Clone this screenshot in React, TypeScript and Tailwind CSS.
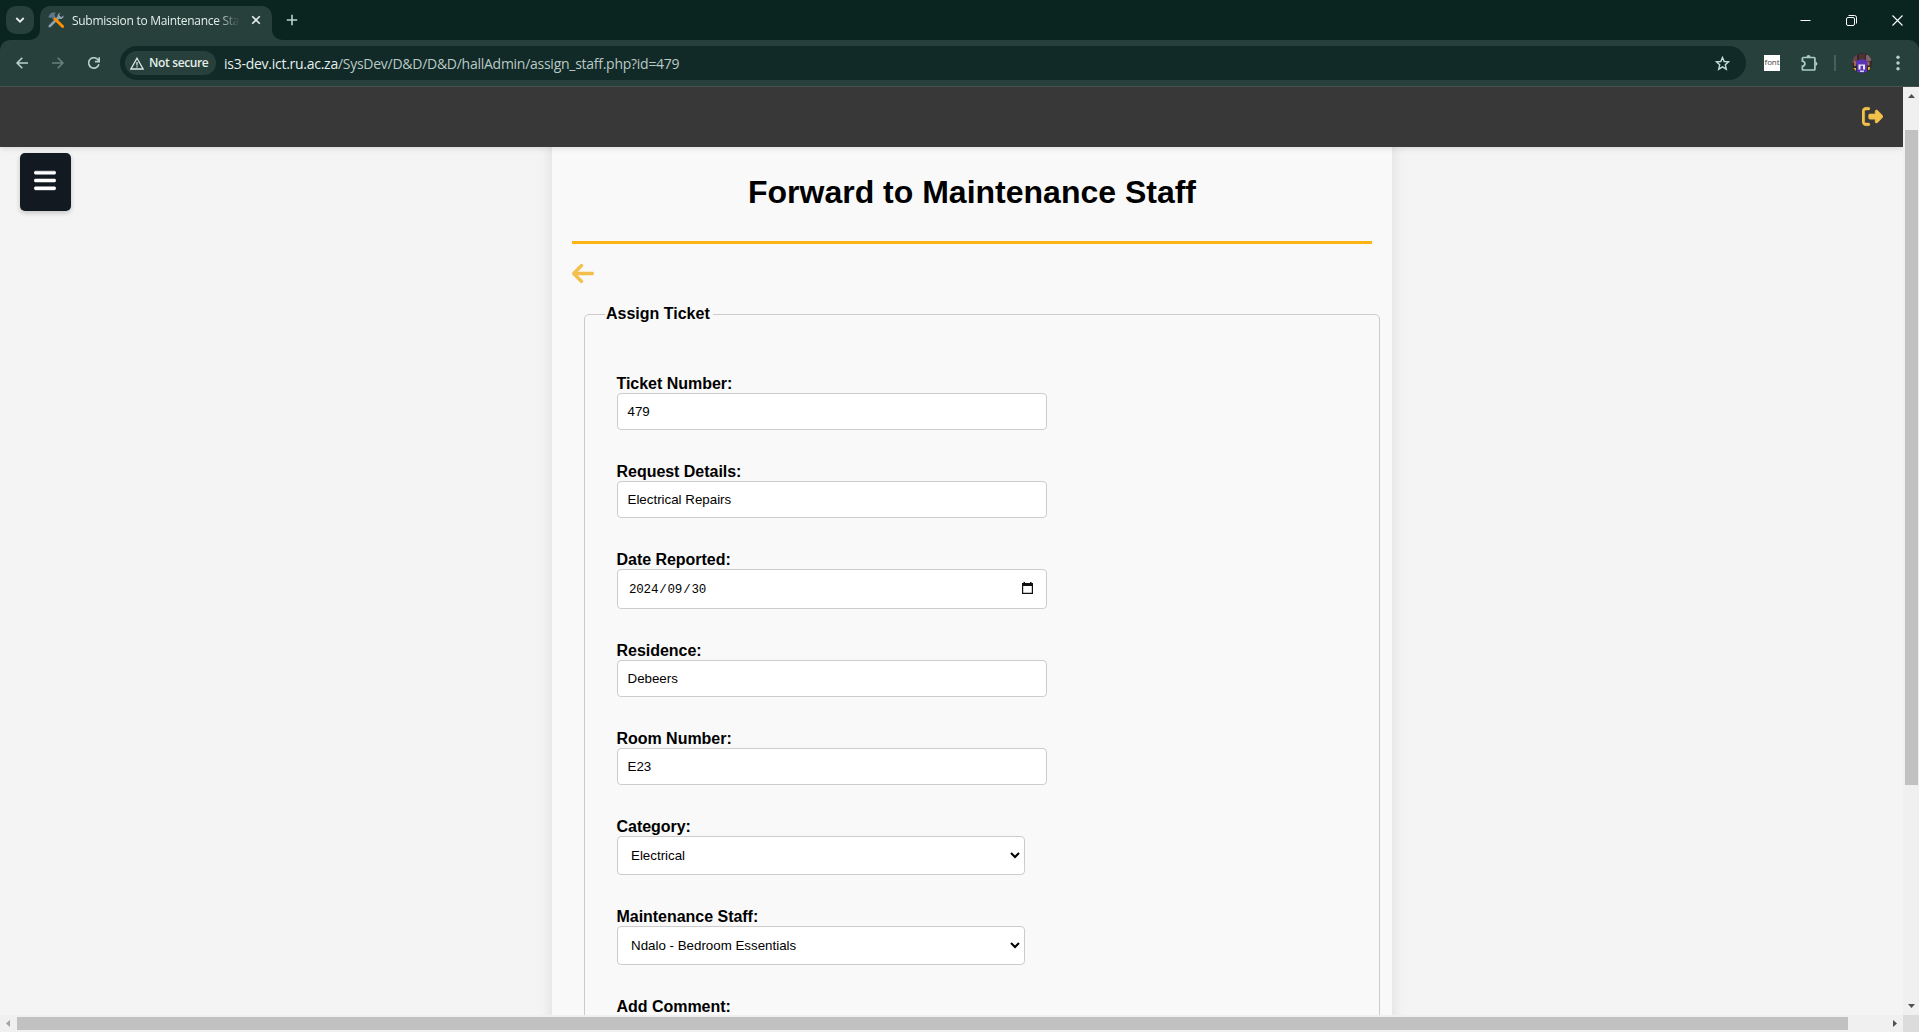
import React from "react";
import { FaArrowLeft, FaBars, FaRightFromBracket } from "react-icons/fa6";

const UI_FONT = "font-['Open_Sans','Noto_Sans',sans-serif]";
const PAGE_FONT = "font-['Liberation_Sans',Arial,sans-serif]";

function ToolsFavicon() {
  return (
    <svg className="h-4 w-4 shrink-0" viewBox="0 0 16 16" fill="none">
      <path d="M1.8 14.2 11 5" stroke="#8fa3b0" strokeWidth="2.6" strokeLinecap="round" />
      <path d="M12.6.8a3.4 3.4 0 0 0-3 4.4c.5 1.500 2.200 2 3.800 1.700 1.500-.4 2.300-1.600 2.200-3.300L13.500 5.100 11.400 4.300l-.2-1.700z" fill="#8fa3b0" />
      <path d="M6.200 6.200 14.600 14.500" stroke="#ff9100" strokeWidth="2.900" strokeLinecap="round" />
      <path d="M.4 4.500 2.200 2.100C3.600.6 5.600.3 8 .9 6.700 1.400 6.300 2 6.600 2.900L7.500 5.100 5.200 7.200 3.700 5.200 1.900 6.200z" fill="#61788a" />
    </svg>
  );
}

function TabStrip() {
  return (
    <div className={`flex h-10 items-start bg-[#0a2420] ${UI_FONT}`}>
      <button className="mt-1.5 ml-1.5 flex h-7 w-7 shrink-0 items-center justify-center rounded-[10px] bg-[#28403b]">
        <svg className="h-2.5 w-2.5" viewBox="0 0 10 10" fill="none" stroke="#e3eeea" strokeWidth="1.8">
          <path d="M1.300 3 5 6.700 8.700 3" />
        </svg>
      </button>
      <div className="mt-1.5 ml-[-4px] flex h-[34px] items-end">
        <svg className="h-2.5 w-2.5" viewBox="0 0 10 10">
          <path d="M10 0V10H0A10 10 0 0 0 10 0" fill="#28403b" />
        </svg>
        <div className="flex h-full w-[232px] items-start rounded-t-[10px] bg-[#28403b] pt-1.5 pl-2">
          <ToolsFavicon />
          <div className="ml-2 w-[168px] overflow-hidden text-[12px] leading-[17px] tracking-[-0.29px] whitespace-nowrap text-[#e3eeea] [mask-image:linear-gradient(to_right,black_86%,transparent_100%)]">
            Submission to Maintenance Staff
          </div>
          <svg className="mt-[3px] ml-[11px] h-2.5 w-2.5" viewBox="0 0 10 10" stroke="#e3eeea" strokeWidth="1.600">
            <path d="M1.200 1.200 8.800 8.800M8.800 1.200 1.200 8.800" />
          </svg>
        </div>
        <svg className="h-2.5 w-2.5" viewBox="0 0 10 10">
          <path d="M0 0V10H10A10 10 0 0 1 0 0" fill="#28403b" />
        </svg>
      </div>
      <svg className="mt-3.5 ml-1 h-3 w-3" viewBox="0 0 12 12" stroke="#b9d3cc" strokeWidth="1.600">
        <path d="M6 .8V11.200M.8 6H11.200" />
      </svg>
      <div className="mt-[15px] mr-4 ml-auto flex items-center gap-[35px]">
        <svg className="h-[11px] w-[11px]" viewBox="0 0 11 11" stroke="#fff" strokeWidth="1">
          <path d="M.5 5.500H10.500" />
        </svg>
        <svg className="h-[11px] w-[11px]" viewBox="0 0 11 11" stroke="#fff" fill="none" strokeWidth="1">
          <rect x=".5" y="2.500" width="8" height="8" rx="1.500" />
          <path d="M2.500.5H8.500A2 2 0 0 1 10.500 2.500V8.500" />
        </svg>
        <svg className="h-[11px] w-[11px]" viewBox="0 0 11 11" stroke="#fff" strokeWidth="1.100">
          <path d="M.5.5 10.500 10.500M10.500.5.5 10.500" />
        </svg>
      </div>
    </div>
  );
}

function Avatar() {
  return (
    <svg className="h-5 w-5" viewBox="0 0 20 20">
      <defs>
        <clipPath id="avatar-clip">
          <circle cx="10" cy="10" r="10" />
        </clipPath>
      </defs>
      <g clipPath="url(#avatar-clip)">
        <rect width="20" height="20" fill="#34272c" />
        <path d="M0 2h5v8H0z" fill="#67454f" />
        <path d="M14 2h5v6h-5z" fill="#82636a" />
        <path d="M7 1h6v6H7z" fill="#4a3431" />
        <path d="M4.500 8 8 6.500h4L15.500 8l1 3-1.500 1v8H5v-8l-1.500-1z" fill="#5a35b5" />
        <path d="M2 8h2v5H2zM15.500 8.500h2v4h-2z" fill="#9c6a52" />
        <path d="M6.500 11.500h2v5h-2zM11 11.500h2v5h-2zM8.500 11.500H11v1.200H8.500z" fill="#eee8f7" />
        <path d="M1 15h3v3H1zM16 14h2v3h-2z" fill="#e5b22c" />
        <path d="M8 17.500h4V19H8z" fill="#d8c9f5" />
      </g>
    </svg>
  );
}

function Toolbar() {
  return (
    <div className="bg-[#0a2420]">
      <div className={`flex h-[47px] items-center rounded-t-[10px] border-b border-[#47534f] bg-[#28403b] ${UI_FONT}`}>
        <div className="ml-4 flex items-center gap-6">
          <svg className="h-3 w-3" viewBox="0 0 12 12" fill="none" stroke="#b5d2ca" strokeWidth="1.600">
            <path d="M12 6H1.200M6.300.8 1.100 6l5.200 5.200" />
          </svg>
          <svg className="h-3 w-3" viewBox="0 0 12 12" fill="none" stroke="#68807a" strokeWidth="1.600">
            <path d="M0 6h10.800M5.700.8 10.900 6l-5.200 5.200" />
          </svg>
          <svg className="h-3 w-3" viewBox="0 0 12 12" fill="none" stroke="#b5d2ca" strokeWidth="1.600">
            <path d="M10.900 7.200A5.200 5.200 0 1 1 10.300 3.200L11 4.400M11.200.2V4.600H6.900" />
          </svg>
        </div>
        <div className="ml-5 flex h-[34px] w-[1626px] items-center rounded-full bg-[#112a27] pr-4 pl-[5px]">
          <div className="flex h-6 w-[91px] items-center rounded-full bg-[#28403b] pl-[5px]">
            <svg className="h-[13px] w-[14px]" viewBox="0 0 14 13" fill="none" stroke="#dbe8e4" strokeWidth="1.300">
              <path d="M7 1.200 13.100 12H.9zM7 5v3.600M7 9.300v1.300" />
            </svg>
            <span className="ml-[5px] text-[12px] font-semibold tracking-[-0.36px] whitespace-nowrap text-[#e3eeea]">Not secure</span>
          </div>
          <div className="ml-2 text-[14px] tracking-[-0.265px] whitespace-nowrap text-[#b9c9c5]">
            <span className="text-[#e6f0ed]">is3-dev.ict.ru.ac.za</span>/SysDev/D&amp;D/D&amp;D/hallAdmin/assign_staff.php?id=479
          </div>
          <svg className="ml-auto h-[15px] w-[15px]" viewBox="0 0 15 15" fill="none" stroke="#c3dcd5" strokeWidth="1.400">
            <path d="M7.500 1.500 9.200 5.500 13.600 5.900 10.300 8.800 11.300 13.200 7.500 10.900 3.700 13.200 4.700 8.800 1.400 5.900 5.800 5.500z" />
          </svg>
        </div>
        <div className="ml-[18px] flex h-4 w-4 items-center justify-center bg-white pb-0.5 text-[8px] leading-none tracking-[-0.1px] text-[#444]">font</div>
        <svg className="ml-[21px] h-[17px] w-[17px]" viewBox="0 0 17 17" fill="none">
          <path d="M2.200 2.500H13.100Q13.900 2.500 13.900 3.300V14.200Q13.900 15 13.100 15H2.200Q1.400 15 1.400 14.200V11.300Q3.900 10.800 3.900 8.800 3.900 6.700 1.400 6.200V3.300Q1.400 2.500 2.200 2.500Z" stroke="#a9cdc2" strokeWidth="1.700" />
          <path d="M5.500 2a2 1.900 0 0 1 4 0zM14.500 6.700a1.900 2 0 0 1 0 4z" fill="#a9cdc2" />
        </svg>
        <div className="ml-4 h-4 w-0.5 bg-[#446059]" />
        <div className="ml-4">
          <Avatar />
        </div>
        <svg className="ml-[24px] h-4 w-1" viewBox="0 0 4 16" fill="#b5d2ca">
          <circle cx="2" cy="2.300" r="1.700" />
          <circle cx="2" cy="8" r="1.700" />
          <circle cx="2" cy="13.700" r="1.700" />
        </svg>
      </div>
    </div>
  );
}

function Field({ label, children }: { label: string; children?: React.ReactNode }) {
  return (
    <div className="flex flex-col">
      <label className="ml-[-0.5px] h-[18px] text-[16px] leading-[18px] font-bold tracking-[-0.03px]">{label}</label>
      {children}
    </div>
  );
}

function TextBox({ value }: { value: string }) {
  return (
    <div className="flex h-[37px] w-[430px] items-center rounded-[4px] border border-[#ccc] bg-white px-[9.5px] pb-px text-[13.333px] leading-[15px]">
      {value}
    </div>
  );
}

function DateBox() {
  return (
    <div className="flex h-10 w-[430px] items-center justify-between rounded-[4px] border border-[#ccc] bg-white pr-[13px] pl-[11px]">
      <div className="flex gap-px pt-[3px] font-['Liberation_Mono',monospace] text-[12.500px] tracking-[-0.2px]">
        <span>2024</span>
        <span>/</span>
        <span>09</span>
        <span>/</span>
        <span>30</span>
      </div>
      <svg className="mb-0.5 h-3 w-[11px]" viewBox="0 0 11 12">
        <path d="M0 1H1.500V0H3V1H8V0H9.500V1H11V12H0ZM1.200 4V10.800H9.800V4Z" fill="#111" fillRule="evenodd" />
      </svg>
    </div>
  );
}

function SelectBox({ value }: { value: string }) {
  return (
    <div className="flex h-[39px] w-[408px] items-center justify-between rounded-[4px] border border-[#ccc] bg-white pr-1 pb-px pl-[13px] text-[13.333px] leading-[15px]">
      <span>{value}</span>
      <svg className="h-2 w-2.5" viewBox="0 0 10 8" fill="none" stroke="#000" strokeWidth="2">
        <path d="M1 2 5 6 9 2" />
      </svg>
    </div>
  );
}

function Page() {
  return (
    <div className={`flex min-w-0 flex-1 flex-col overflow-hidden bg-[#f4f4f4] text-black ${PAGE_FONT}`}>
      <header className="relative z-10 flex h-[60px] shrink-0 items-center justify-end bg-[#383838] pr-5 shadow-[0_2px_5px_rgba(0,0,0,0.1)]">
        <FaRightFromBracket className="mt-[-2px] h-[21px] w-[21px] stroke-[#f2c04b] stroke-[12] text-[#f2c04b]" />
      </header>
      <div className="flex min-h-0 flex-1">
        <aside className="w-[552px] shrink-0 pt-1.5 pl-5">
          <button className="flex h-[58px] w-[51px] items-center justify-center rounded-[5px] bg-[#121920] pr-px pb-[3px] text-white shadow-[0_2px_5px_rgba(0,0,0,0.2)]">
            <FaBars className="h-[25px] w-[22px] stroke-white stroke-[10]" />
          </button>
        </aside>
        <main className="mt-[-20px] h-[960px] w-[840px] shrink-0 bg-[#f9f9f9] px-5 pt-[47px] shadow-[0_0_15px_rgba(0,0,0,0.1)]">
          <h1 className="h-[37px] text-center text-[32px] leading-[37px] font-bold">Forward to Maintenance Staff</h1>
          <hr className="mt-[30px] h-[3px] border-0 bg-[#fdb515]" />
          <FaArrowLeft className="mt-[17px] ml-[-0.5px] h-[25px] w-[22px] stroke-[#f2c04b] stroke-[10] text-[#f2c04b]" />
          <fieldset className="mt-[19px] ml-3 h-[760px] w-[796px] rounded-[5px] border border-[#ccc] pl-5">
            <legend className="pr-[3px] pb-px pl-px text-[16px] leading-[18px] font-bold">Assign Ticket</legend>
            <div className="flex flex-col gap-[33px] pt-[51px] pl-3">
              <Field label="Ticket Number:">
                <TextBox value="479" />
              </Field>
              <Field label="Request Details:">
                <TextBox value="Electrical Repairs" />
              </Field>
              <Field label="Date Reported:">
                <DateBox />
              </Field>
              <Field label="Residence:">
                <TextBox value="Debeers" />
              </Field>
              <Field label="Room Number:">
                <TextBox value="E23" />
              </Field>
              <Field label="Category:">
                <SelectBox value="Electrical" />
              </Field>
              <Field label="Maintenance Staff:">
                <SelectBox value="Ndalo - Bedroom Essentials" />
              </Field>
              <Field label="Add Comment:" />
            </div>
          </fieldset>
        </main>
      </div>
    </div>
  );
}

function VerticalScrollbar() {
  return (
    <div className="flex w-4 shrink-0 flex-col items-center bg-[#f0f0f0]">
      <svg className="mt-[7px] h-1 w-[7px]" viewBox="0 0 7 4" fill="#505050">
        <path d="M0 4 3.500 0 7 4z" />
      </svg>
      <div className="mt-8 ml-px h-[655px] w-[13px] bg-[#c1c1c1]" />
      <svg className="mt-auto mb-[7px] h-1 w-[7px]" viewBox="0 0 7 4" fill="#505050">
        <path d="M0 0 3.500 4 7 0z" />
      </svg>
    </div>
  );
}

function HorizontalScrollbar() {
  return (
    <div className="flex h-[17px] shrink-0">
      <div className="flex flex-1 items-center bg-[#f0f0f0]">
        <svg className="ml-1.5 h-[7px] w-1" viewBox="0 0 4 7" fill="#a3a3a3">
          <path d="M4 0V7L0 3.500z" />
        </svg>
        <div className="ml-[7px] h-[13px] w-[1831px] bg-[#c1c1c1]" />
        <svg className="mr-1.5 ml-auto h-[7px] w-1" viewBox="0 0 4 7" fill="#505050">
          <path d="M0 0V7L4 3.500z" />
        </svg>
      </div>
      <div className="w-4 bg-[#dcdcdc]" />
    </div>
  );
}

export default function App() {
  return (
    <div className="flex h-[1032px] w-[1919px] flex-col overflow-hidden">
      <TabStrip />
      <Toolbar />
      <div className="flex min-h-0 flex-1">
        <Page />
        <VerticalScrollbar />
      </div>
      <HorizontalScrollbar />
    </div>
  );
}
